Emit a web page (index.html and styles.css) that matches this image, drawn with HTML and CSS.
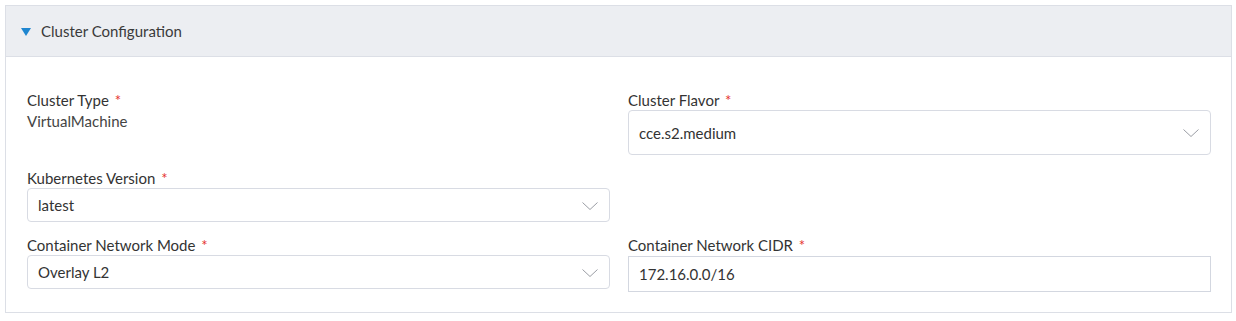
FILE: index.html
```html
<!DOCTYPE html>
<html lang="en">
<head>
  <meta charset="UTF-8">
  <title>Cluster Configuration</title>
  <link rel="stylesheet" href="styles.css">
</head>
<body>
  <div class="panel">
    <div class="panel-header">
      <span class="caret"></span>
      <span class="panel-title">Cluster Configuration</span>
    </div>
    <div class="panel-body">
      <div class="field">
        <div class="label">Cluster Type <span class="req">*</span></div>
        <div class="value">VirtualMachine</div>
      </div>
      <div class="field">
        <div class="label">Cluster Flavor <span class="req">*</span></div>
        <div class="select select-tall">
          <span>cce.s2.medium</span>
          <svg class="chevron" width="16" height="8" viewBox="0 0 16 8"><polyline points="0.5,0.5 8,7.5 15.5,0.5" fill="none" stroke="#9a9da4" stroke-width="1"/></svg>
        </div>
      </div>
      <div class="field">
        <div class="label">Kubernetes Version <span class="req">*</span></div>
        <div class="select">
          <span>latest</span>
          <svg class="chevron" width="16" height="8" viewBox="0 0 16 8"><polyline points="0.5,0.5 8,7.5 15.5,0.5" fill="none" stroke="#9a9da4" stroke-width="1"/></svg>
        </div>
      </div>
      <div class="field"></div>
      <div class="field">
        <div class="label">Container Network Mode <span class="req">*</span></div>
        <div class="select">
          <span>Overlay L2</span>
          <svg class="chevron" width="16" height="8" viewBox="0 0 16 8"><polyline points="0.5,0.5 8,7.5 15.5,0.5" fill="none" stroke="#9a9da4" stroke-width="1"/></svg>
        </div>
      </div>
      <div class="field">
        <div class="label">Container Network CIDR <span class="req">*</span></div>
        <div class="input">172.16.0.0/16</div>
      </div>
    </div>
  </div>
</body>
</html>
```
FILE: styles.css
```css
body {
  margin: 0;
  padding: 5px 4px 0 5px;
  font-family: Lato, 'Liberation Sans', sans-serif;
  font-size: 15px;
  color: #333;
  background: white;
}
.panel {
  border: 1px solid #dcdfe6;
  background: white;
}
.panel-header {
  display: flex;
  align-items: center;
  height: 50px;
  padding-left: 15px;
  background: #eceef2;
  border-bottom: 1px solid #dcdfe6;
}
.caret {
  width: 0;
  height: 0;
  border-left: 5px solid transparent;
  border-right: 5px solid transparent;
  border-top: 8px solid #1f86d0;
  margin-right: 10px;
  margin-top: 1px;
}
.panel-title {
  font-size: 15px;
  color: #3a3a3a;
}
.panel-body {
  display: grid;
  grid-template-columns: 1fr 1fr;
  column-gap: 18px;
  row-gap: 13px;
  align-items: start;
  padding: 33px 20px 20px 21px;
}
.label {
  line-height: 20px;
  color: #333;
}
.req {
  color: #e5322d;
  margin-left: 2px;
}
.value {
  line-height: 22px;
  color: #444;
}
.select, .input {
  display: flex;
  align-items: center;
  justify-content: space-between;
  box-sizing: border-box;
  height: 34px;
  padding: 0 11px 0 10px;
  border: 1px solid #d8dbe3;
  border-radius: 4px;
  color: #333;
}
.select-tall {
  height: 45px;
}
.input {
  height: 36px;
  margin-top: 1px;
  border-radius: 0;
  border-color: #d3d7e0;
}
.chevron {
  display: block;
  margin-top: 1px;
}
```
